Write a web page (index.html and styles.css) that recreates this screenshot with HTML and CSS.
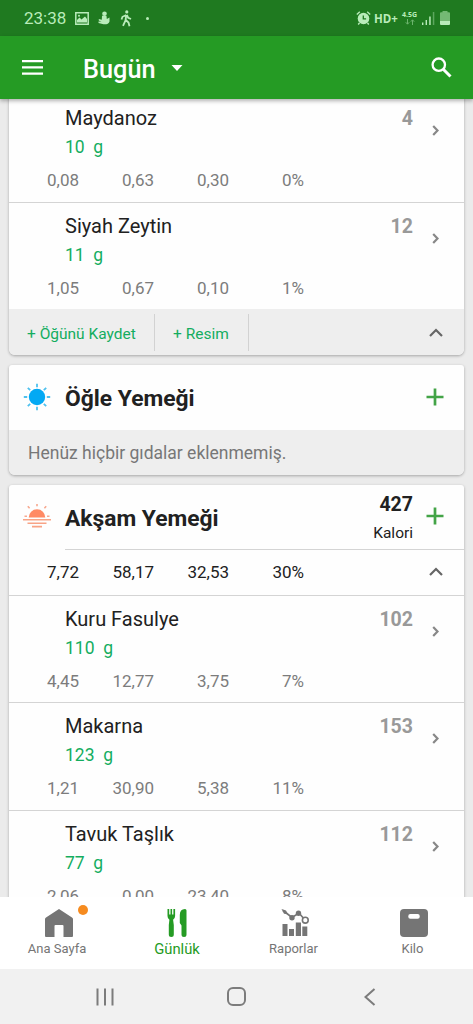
FILE: index.html
```html
<!DOCTYPE html>
<html lang="tr">

<head>
  <meta charset="UTF-8">
  <meta name="viewport" content="width=device-width, initial-scale=1.0">
  <title>Günlük</title>
  <link rel="stylesheet" href="styles.css">
</head>

<body>
  <div class="status-bar">
    <span class="clock">23:38</span>
    <svg class="picture-icon" width="14" height="13" viewBox="0 0 14 13">
      <path fill="none" stroke="currentColor" stroke-width="1.5" d="M.8.8h12.4v11.4H.8z"/>
      <path fill="currentColor" d="M2 10.5V8l2.5-2.5 2 2L10 4.500l2 2.500v3.500z"/>
      <circle cx="4" cy="3.800" r="1" fill="currentColor"/>
    </svg>
    <svg class="sitting-icon" width="12" height="14" viewBox="0 0 12 14" fill="currentColor">
      <circle cx="6.500" cy="2.700" r="2.300"/>
      <path d="M4 4.800 8.500 5l.3 3 2.700-1.500v4C11 13 8 13.500 5.500 13.200L.5 12v-1.500l3 .3L.8 9.500V8l3 .8z"/>
    </svg>
    <svg class="walk-icon" width="12" height="17" viewBox="0 0 12 17">
      <circle cx="6.800" cy="1.900" r="1.600" fill="currentColor"/>
      <path d="M6.300 5 5.500 10.500 3 15.800M5.800 10l2.700 2.500 1 3.700M6.300 5 2.500 6.800 1.500 9.500M6.800 5l1.400 2.700L11 9" fill="none" stroke="currentColor" stroke-width="1.800"/>
    </svg>
    <span class="dot"></span>
    <svg class="alarm-icon" width="15" height="14" viewBox="0 0 15 14">
      <circle cx="7.500" cy="7.500" r="5.800" fill="currentColor"/>
      <path d="M7.300 4.500v3.400h2.800" fill="none" stroke="#1f7a20" stroke-width="1.300"/>
      <path d="M.8 3.500 3.800.8M14.200 3.500 11.200.8M3.500 12l-1.300 1.500M11.500 12l1.300 1.500" stroke="currentColor" stroke-width="1.400"/>
    </svg>
    <span class="hd">HD+</span>
    <span class="network">4.5G<svg width="10" height="6" viewBox="0 0 10 6"><path d="M2.500 0v5M.8 3.300l1.700 1.900 1.700-1.900M7.500 6V1M5.800 2.700 7.500.8l1.700 1.900" fill="none" stroke="currentColor"/></svg></span>
    <svg class="signal-icon" width="13" height="13" viewBox="0 0 13 13" fill="currentColor">
      <path d="M0 10.500h1.400V13H0zM3.600 8H5v5H3.600zM7.200 4.500h1.500V13H7.200z"/>
      <path opacity=".4" d="M10.800 0h1.500v13h-1.500z"/>
    </svg>
    <svg class="battery-icon" width="10" height="14" viewBox="0 0 10 14" fill="currentColor">
      <path opacity=".55" d="M2.500 0h5v1.200H9q1 0 1 1V10H0V2.200q0-1 1-1h1.500z"/>
      <path d="M0 10h10v3q0 1-1 1H1q-1 0-1-1z"/>
    </svg>
  </div>

  <header class="app-bar">
    <svg width="21" height="15" viewBox="0 0 21 15"><path d="M0 1.200h21M0 7.400h21M0 13.600h21" stroke="#fff" stroke-width="2.200"/></svg>
    <h1>Bugün</h1>
    <svg width="12" height="6" viewBox="0 0 12 6"><path d="M.5 0h11L6 6z" fill="#fff"/></svg>
    <svg class="search-icon" width="21" height="21" viewBox="0 0 21 21" fill="none" stroke="#fff">
      <circle cx="7.800" cy="7.700" r="6.200" stroke-width="2.300"/>
      <path d="m12.500 12.500 7 7" stroke-width="3"/>
    </svg>
  </header>

  <main class="diary">
    <section class="meal breakfast">
      <div class="food">
        <div class="food-name">Maydanoz</div>
        <div class="amount">10&nbsp; g</div>
        <div class="values"><span>0,08</span><span>0,63</span><span>0,30</span><span>0%</span></div>
        <div class="calories">4</div>
        <svg class="chevron" width="8" height="11" viewBox="0 0 8 11"><path d="m1.200 1 4.300 4.500L1.200 10"/></svg>
      </div>
      <div class="food">
        <div class="food-name">Siyah Zeytin</div>
        <div class="amount">11&nbsp; g</div>
        <div class="values"><span>1,05</span><span>0,67</span><span>0,10</span><span>1%</span></div>
        <div class="calories">12</div>
        <svg class="chevron" width="8" height="11" viewBox="0 0 8 11"><path d="m1.200 1 4.300 4.500L1.200 10"/></svg>
      </div>
      <div class="meal-actions">
        <a class="save">+ Öğünü Kaydet</a>
        <a class="photo">+ Resim</a>
        <svg class="collapse" width="14" height="9" viewBox="0 0 14 9"><path d="m1 8 6-6 6 6"/></svg>
      </div>
    </section>

    <section class="meal">
      <div class="meal-head">
        <svg class="meal-icon" width="28" height="28" viewBox="0 0 28 28">
          <circle cx="14" cy="14" r="8.200" fill="#03a9f4"/>
          <path d="M14 .8v3.400M14 23.800v3.400M.8 14h3.400M23.800 14h3.400M4.800 4.800 7.200 7.200M20.800 20.800l2.400 2.400M4.800 23.200l2.400-2.400M20.800 7.200l2.400-2.400" stroke="#4fc1ee" stroke-width="1.800"/>
        </svg>
        <h2>Öğle Yemeği</h2>
        <svg class="add" width="18" height="18" viewBox="0 0 18 18"><path d="M9 .5v17M.5 9h17"/></svg>
      </div>
      <div class="empty">Henüz hiçbir gıdalar eklenmemiş.</div>
    </section>

    <section class="meal">
      <div class="meal-head dinner-head">
        <svg class="meal-icon" width="28" height="28" viewBox="0 0 28 28">
          <path d="M5.700 15.500a8.300 8.300 0 0 1 16.600 0z" fill="#ff8a65"/>
          <path d="M14 2v2.300M4.800 4.300l1.800 2M23.200 4.300l-1.800 2M1.500 14.300H4M24 14.300h2.500" stroke="#f7a88f" stroke-width="1.600"/>
          <path d="M0 17.800h28M4.500 21.300h19M9 24.600h10" stroke="#f8a386" stroke-width="1.600"/>
        </svg>
        <h2>Akşam Yemeği</h2>
        <div class="total"><strong>427</strong><span>Kalori</span></div>
        <svg class="add" width="18" height="18" viewBox="0 0 18 18"><path d="M9 .5v17M.5 9h17"/></svg>
      </div>
      <div class="summary">
        <div class="values"><span>7,72</span><span>58,17</span><span>32,53</span><span>30%</span></div>
        <svg class="collapse" width="14" height="9" viewBox="0 0 14 9"><path d="m1 8 6-6 6 6"/></svg>
      </div>
      <div class="food">
        <div class="food-name">Kuru Fasulye</div>
        <div class="amount">110&nbsp; g</div>
        <div class="values"><span>4,45</span><span>12,77</span><span>3,75</span><span>7%</span></div>
        <div class="calories">102</div>
        <svg class="chevron" width="8" height="11" viewBox="0 0 8 11"><path d="m1.200 1 4.300 4.500L1.200 10"/></svg>
      </div>
      <div class="food">
        <div class="food-name">Makarna</div>
        <div class="amount">123&nbsp; g</div>
        <div class="values"><span>1,21</span><span>30,90</span><span>5,38</span><span>11%</span></div>
        <div class="calories">153</div>
        <svg class="chevron" width="8" height="11" viewBox="0 0 8 11"><path d="m1.200 1 4.300 4.500L1.200 10"/></svg>
      </div>
      <div class="food">
        <div class="food-name">Tavuk Taşlık</div>
        <div class="amount">77&nbsp; g</div>
        <div class="values"><span>2,06</span><span>0,00</span><span>23,40</span><span>8%</span></div>
        <div class="calories">112</div>
        <svg class="chevron" width="8" height="11" viewBox="0 0 8 11"><path d="m1.200 1 4.300 4.500L1.200 10"/></svg>
      </div>
    </section>
  </main>

  <nav class="tabs">
    <a class="tab">
      <span class="tab-icon home-icon">
        <svg width="28" height="28" viewBox="0 0 28 28"><path d="M14 0 27 8.500Q28 9 28 10v17q0 1-1 1h-8.500V17q0-1-1-1h-7q-1 0-1 1v11H1q-1 0-1-1V10q0-1 1-1.500z" fill="currentColor"/></svg>
        <i class="badge"></i>
      </span>
      Ana Sayfa
    </a>
    <a class="tab active">
      <span class="tab-icon">
        <svg width="20" height="28" viewBox="0 0 20 28" fill="currentColor">
          <path d="M.5 0h1.700v5.500h1.300V0h1.600v5.500h1.300V0h1.700v7q0 2.500-2 3.700L6.800 16v9.500q0 2.500-2.500 2.500t-2.500-2.500V16l.6-5.300Q.5 9.500.5 7z"/>
          <path d="M19.500 1.500v24q0 2.500-2.500 2.500t-2.500-2.500V16.500L12.800 14V6q0-6 5.200-6 1.500 0 1.500 1.500z"/>
        </svg>
      </span>
      Günlük
    </a>
    <a class="tab">
      <span class="tab-icon reports-icon">
        <svg width="28" height="27" viewBox="0 0 28 27">
          <path d="M1.500 15H6.500v12h-5zM8 20h5v7H8zM14.800 13.500h5.200V27h-5.200zM21.300 17.500h5V27h-5z" fill="currentColor"/>
          <path d="m2 1.500 9 7 7-4.500 6 7" fill="none" stroke="currentColor" stroke-width="1.700"/>
          <path d="M.5 0 5 1.500l2 3.800-4-.5z" fill="currentColor"/>
          <circle cx="11" cy="8.800" r="2.700" fill="currentColor"/>
          <circle cx="17.500" cy="4.300" r="2.700" fill="currentColor"/>
          <circle cx="24.300" cy="11.200" r="2.900" fill="#fff" stroke="currentColor" stroke-width="1.600"/>
        </svg>
      </span>
      Raporlar
    </a>
    <a class="tab">
      <span class="tab-icon weight-icon">
        <svg width="28" height="28" viewBox="0 0 28 28"><rect width="28" height="28" rx="4" fill="currentColor"/><rect x="8.300" y="5" width="11.400" height="4.800" rx="2" fill="#fff"/></svg>
      </span>
      Kilo
    </a>
  </nav>

  <div class="system-nav">
    <svg width="18" height="18" viewBox="0 0 18 18"><path d="M1.500.5v17M9 .5v17M16.500.5v17"/></svg>
    <svg class="home-button" width="19" height="19" viewBox="0 0 19 19"><rect x="1" y="1" width="17" height="17" rx="5"/></svg>
    <svg width="12" height="18" viewBox="0 0 12 18"><path d="M10.500 1 1.500 9l9 8"/></svg>
  </div>
</body>

</html>
```

FILE: styles.css
```css
* {
  box-sizing: border-box;
}

body {
  margin: 0;
  height: 1024px;
  display: flex;
  flex-direction: column;
  overflow: hidden;
  font-family: Roboto, "Noto Sans", sans-serif;
  color: #212121;
  background: #ebebeb;
}

h1,
h2 {
  margin: 0;
}

svg {
  display: block;
  flex: none;
}

/* phone status bar */
.status-bar {
  height: 36px;
  flex: none;
  display: flex;
  align-items: center;
  padding: 0 24px;
  background: #1f7a20;
  color: #b9ecba;
}

.clock {
  width: 51px;
  font-size: 17px;
}

.sitting-icon {
  margin-left: 9px;
}

.walk-icon {
  margin-left: 10px;
}

.dot {
  width: 3px;
  height: 3px;
  margin-left: 14px;
  border-radius: 50%;
  background: #b9ecba;
}

.alarm-icon {
  margin-left: auto;
}

.hd {
  margin-left: 3px;
  width: 28px;
  font: bold 11.5px "Open Sans", sans-serif;
}

.network {
  width: 20px;
  font: bold 7px/8px "Open Sans", sans-serif;
}

.network svg {
  margin: 0 0 0 3px;
  opacity: 0.5;
}

.battery-icon {
  margin-left: 5px;
  margin-right: -1px;
}

/* title bar */
.app-bar {
  height: 63px;
  flex: none;
  display: flex;
  align-items: center;
  padding: 0 22px;
  background: #259b24;
  color: #fff;
  box-shadow: 0 2px 4px rgba(0, 0, 0, 0.3);
  z-index: 1;
}

.app-bar h1 {
  margin: 3px 15px 0 40px;
  font-size: 25.3px;
  font-weight: 500;
}

.search-icon {
  margin-left: auto;
  margin-right: -1px;
}

/* meals */
.diary {
  flex: 1;
  min-height: 0;
  padding: 0 9px;
  overflow: hidden;
}

.meal {
  margin-bottom: 10px;
  border-radius: 3px 3px 6px 6px;
  background: #fefefe;
  box-shadow: 0 1px 3px rgba(0, 0, 0, 0.3);
  overflow: hidden;
}

/* list is scrolled a little under the title bar */
.breakfast {
  margin-top: -4px;
}

.food {
  height: 107.5px;
  display: grid;
  grid-template-columns: 56px 1fr 60px 51px;
  grid-template-rows: 31px 31px 1fr;
  padding-top: 8px;
  border-bottom: 1px solid #d4d4d4;
}

.food:nth-last-child(2) {
  border-bottom-color: #eee;
}

.meal:last-child .food {
  border-bottom-color: #d4d4d4;
}

.food-name {
  grid-column: 2;
  line-height: 31px;
  font-size: 20px;
}

.amount {
  grid-column: 2;
  grid-row: 2;
  line-height: 27px;
  font-size: 17.5px;
  color: #14ad5f;
}

.values {
  grid-column: 1 / -1;
  grid-row: 3;
  display: grid;
  grid-template-columns: 70px 75px 75px 75px;
  text-align: right;
  line-height: 30px;
  font-size: 17px;
  color: #7c7c7c;
}

.calories {
  grid-column: 3;
  grid-row: 1;
  line-height: 31px;
  font-size: 19.5px;
  font-weight: 700;
  color: #999;
  text-align: right;
}

.chevron {
  grid-column: 4;
  grid-row: 1 / 3;
  margin: 22px 0 0 19px;
  fill: none;
  stroke: #888;
  stroke-width: 2.2;
}

.meal-actions {
  height: 45px;
  display: flex;
  align-items: center;
  padding-right: 21px;
  background: #eee;
  color: #14ad5f;
  font-size: 15.5px;
}

.save,
.photo {
  height: 37px;
  line-height: 40px;
  padding-left: 18px;
  border-right: 1px solid #d2d2d2;
}

.save {
  width: 146px;
}

.photo {
  width: 94px;
}

.collapse {
  margin-left: auto;
  fill: none;
  stroke: #666;
  stroke-width: 2.2;
}

.meal-head {
  height: 65px;
  display: flex;
  align-items: center;
  padding: 0 20px 0 14px;
}

.dinner-head {
  height: 64px;
}

.meal-icon {
  margin-bottom: 2px;
}

.meal-head h2 {
  margin: 2px auto 0 14px;
  font-size: 22.8px;
  font-weight: 700;
}

.add {
  margin: 0 0 2px 13px;
  fill: none;
  stroke: #43a447;
  stroke-width: 2.7;
}

.empty {
  height: 45px;
  padding-left: 19px;
  line-height: 47px;
  font-size: 17.5px;
  color: #777;
  background: #eee;
}

.total {
  display: flex;
  flex-direction: column;
  align-items: flex-end;
  padding-top: 3px;
  line-height: 28px;
}

.total strong {
  font-size: 19.5px;
}

.total span {
  font-size: 15.5px;
}

.summary {
  height: 46.5px;
  display: flex;
  align-items: center;
  padding-right: 21px;
  border-bottom: 1px solid #d4d4d4;
  background: linear-gradient(#d4d4d4, #d4d4d4) 56px 0 / 100% 1px no-repeat;
}

.summary .values {
  color: #212121;
}

/* bottom tabs */
.tabs {
  height: 72px;
  flex: none;
  display: grid;
  grid-template-columns: 114px 126px 107px 131px;
  padding-top: 10px;
  background: #fff;
  z-index: 1;
}

.tab {
  display: flex;
  flex-direction: column;
  align-items: center;
  color: #757575;
  font-size: 13px;
  line-height: 22px;
}

.tab-icon {
  position: relative;
  height: 31px;
  display: flex;
  align-items: center;
}

.home-icon {
  margin-left: 4px;
}

.reports-icon,
.weight-icon {
  margin-left: 3px;
}

.badge {
  position: absolute;
  top: -2px;
  right: -15px;
  width: 10px;
  height: 10px;
  border-radius: 50%;
  background: #f68b1f;
}

.active {
  color: #259b24;
  font-size: 14.8px;
}

/* android buttons */
.system-nav {
  height: 55px;
  flex: none;
  display: flex;
  align-items: center;
  justify-content: space-between;
  padding: 0 97px 0 96px;
  background: #f1f1f1;
}

.system-nav svg {
  fill: none;
  stroke: #7c7c7c;
  stroke-width: 2;
}

.system-nav .home-button {
  margin-right: 5px;
}
```
